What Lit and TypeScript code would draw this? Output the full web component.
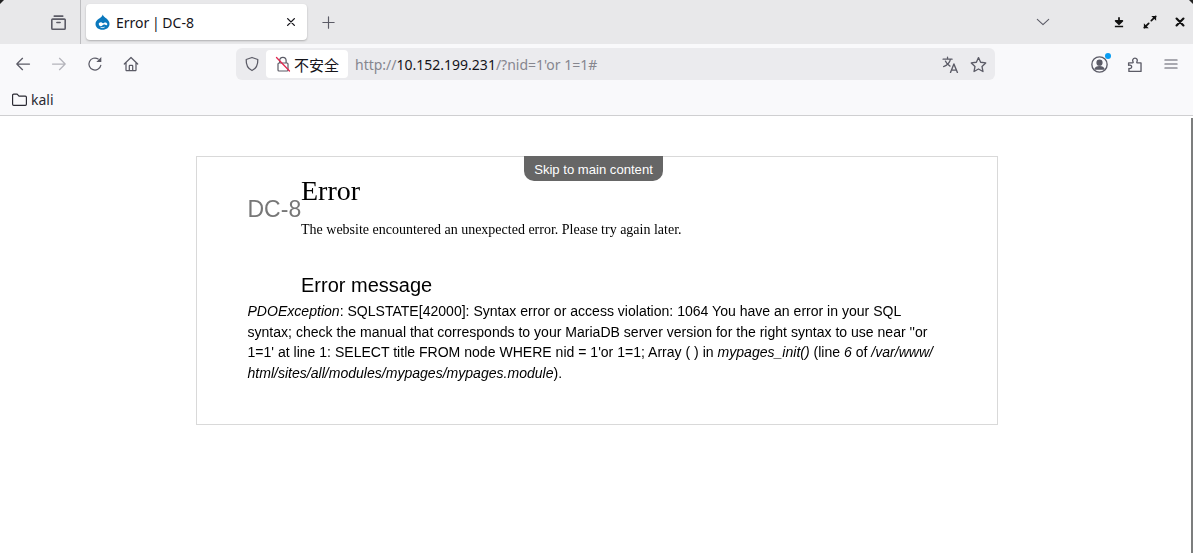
import { LitElement, html, css, svg } from "lit";
import { customElement } from "lit/decorators.js";

const ic = (w: number, body: unknown, cls = "") => html`<svg class="ic ${cls}" width=${w} height=${w} viewBox="0 0 16 16" fill="none" stroke="currentColor" stroke-width="1.25" stroke-linecap="round" stroke-linejoin="round">${body}</svg>`;

@customElement("app-root")
export class AppRoot extends LitElement {
  static styles = css`
    :host { display: block; width: 1193px; height: 554px; position: relative; overflow: hidden; background: #fff; font-family: "Noto Sans", sans-serif; color: #15141a; }
    .gray { will-change: opacity; }
    .ic { display: block; flex: none; }
    .tabbar { height: 44px; background: #e8e8ea; display: flex; align-items: stretch; }
    .side { flex: none; border-right: 1px solid #bdbdc0; display: flex; align-items: center; justify-content: flex-end; padding-right: 13px; width: 67px; color: #5b5b66; }
    .tab { margin: 4px 0 4px 5px; width: 221px; height: 36px; background: #fff; border-radius: 4px; box-shadow: 0 1px 2px rgba(0,0,0,.25); display: flex; align-items: center; padding: 0 10px 0 9px; box-sizing: border-box; font-size: 14px; gap: 6px; }
    .tab-title { flex: 1; white-space: nowrap; word-spacing: -1px; }
    .plus { margin-left: 14px; align-self: center; color: #5b5b66; }
    .spacer { flex: 1; }
    .wctl { display: flex; align-items: center; color: #5b5b66; }
    .chev { margin-right: 63px; }
    .wbtns { display: flex; align-items: center; gap: 18px; padding-right: 8px; color: #111; }
    .toolbar { height: 40px; background: #f9f9fb; display: flex; align-items: center; color: #5b5b66; }
    .nav { display: flex; align-items: center; gap: 20px; padding-left: 15px; width: 221px; }
    .dim { color: #b4b4bb; }
    .urlbar { width: 759px; height: 32px; background: #ebebee; border-radius: 6px; display: flex; align-items: center; box-sizing: border-box; padding-left: 8px; }
    .secure { margin-left: 6px; width: 82px; height: 28px; background: #fff; border-radius: 4px; display: flex; align-items: center; padding-left: 9px; box-sizing: border-box; gap: 3px; color: #15141a; font: 15px "Noto Sans CJK SC", "Noto Sans", sans-serif; }
    .url { margin-left: 7px; font-size: 14px; color: #86868e; white-space: nowrap; flex: 1; }
    .url b { font-weight: 400; color: #15141a; }
    .urlicons { display: flex; gap: 11px; align-items: center; padding-right: 8px; }
    .right { display: flex; align-items: center; gap: 19px; margin-left: 96px; }
    .menu { margin-left: 1px; }
    .acct { position: relative; }
    .dot { position: absolute; right: -3px; top: -3px; width: 6px; height: 6px; border-radius: 50%; background: #0a9df2; }
    .bookmarks { height: 31px; background: #f9f9fb; border-bottom: 1px solid #cfcfd1; display: flex; align-items: center; padding-left: 11px; gap: 3px; font-size: 14px; color: #2b2a33; }
    .page { padding: 40px 195px 0 196px; }
    .box { position: relative; width: 802px; height: 269px; box-sizing: border-box; border: 1px solid #d9d9d9; padding: 15px 51px 0 50.500px; font-family: "Liberation Sans", Arial, sans-serif; font-size: 14.05px; line-height: 20.67px; color: #000; }
    .skip { position: absolute; top: -1px; left: 327px; width: 139px; height: 25px; background: #666; color: #fff; font-size: 13.1px; line-height: 28px; text-align: center; border-radius: 0 0 10px 10px; }
    .head { display: flex; }
    .site { width: 53.500px; flex: none; margin-top: 22px; font-size: 23px; line-height: 30px; color: #777; white-space: nowrap; }
    h1 { margin: 0; font: 400 28px/38px "Liberation Serif", "Times New Roman", serif; }
    .lead { margin: 10px 0 0; font: 14px/20px "Liberation Serif", "Times New Roman", serif; }
    h2 { margin: 33px 0 0; font: 400 20px/24px "Liberation Sans", Arial, sans-serif; }
    .msg { margin: 4px 0 0; width: 690px; }
    .corner { position: absolute; top: 0; width: 4px; height: 4px; background: #222; }
    .corner.l { left: 0; clip-path: polygon(0 0, 100% 0, 0 100%); }
    .corner.r { right: 0; clip-path: polygon(0 0, 100% 0, 100% 100%); }
    .scroll { position: absolute; right: 0; top: 118px; bottom: 1px; width: 2px; background: #7c7e7e; }
  `;

  render() {
    return html`
      <div class="gray">
      <div class="tabbar">
        <div class="side">
          ${ic(17, svg`<path d="M4 2h8M2.500 4.800h11a.8.8 0 0 1 .8.8v7.700a1 1 0 0 1-1 1H2.700a1 1 0 0 1-1-1V5.600a.8.8 0 0 1 .8-.8zM6.500 8h3" stroke-width="1.500"/>`)}
        </div>
        <div class="tab">
          <svg class="ic" width="15" height="16" viewBox="0 0 15 16">
            <path d="M7.700.5c.5 1.900 2.300 2.800 3.800 4.100 1.800 1.500 3 3.100 3 5.300 0 3.400-3 5.800-7 5.800s-7-2.500-7-5.800c0-2.300 1.500-4 3.300-5.200C5.500 3.700 7.200 2.700 7.700.5z" fill="#0a78bd"/>
            <path d="M3.500 10.300c.4-1.400 2-2.500 3.200-1.700.8.500 1.300.9 2.200.3.900-.7 2.600-.7 3.200.7.400 1 0 1.600-.7 1.700-1 .1-1.700-1.200-3-.5-.8.400-1.200 1.300-2.400 1.300-1.400 0-2.300-.7-2-1.800z" fill="#fff"/>
            <path d="M5.500 13.100c1.200.6 2.800.6 4 0" stroke="#fff" fill="none"/>
          </svg>
          <span class="tab-title">Error | DC-8</span>
          ${ic(12, svg`<path d="M3.500 3.500l9 9M12.500 3.500l-9 9" stroke-width="1.800"/>`)}
        </div>
        ${ic(15, svg`<path d="M8 2v12M2 8h12"/>`, "plus")}
        <div class="spacer"></div>
        <div class="wctl">
          ${ic(14, svg`<path d="M1.500 5l6.500 6 6.500-6"/>`, "chev")}
          <div class="wbtns">
            ${ic(12, svg`<path d="M8 1.500v6M3.500 6.500h9L8 11zM2.500 14h11" stroke-width="2.300" stroke-linecap="butt" fill="currentColor"/>`)}
            ${ic(14, svg`<path d="M9.500 6.500l5-5M6.500 9.500l-5 5" stroke-width="2"/><path d="M9.500 1H15v5.500zM6.500 15H1V9.500z" fill="currentColor" stroke="none"/>`)}
            ${ic(10, svg`<path d="M2.500 2.500l11 11M13.500 2.500l-11 11" stroke-width="3.500"/>`)}
          </div>
        </div>
      </div>

      <div class="toolbar">
        <div class="nav">
          ${ic(16, svg`<path d="M14.500 8H1.800M7.500 2.300L1.800 8l5.700 5.700"/>`)}
          ${ic(16, svg`<path d="M1.500 8h12.700M8.500 2.300L14.200 8l-5.700 5.700"/>`, "dim")}
          ${ic(16, svg`<path d="M13.800 9.300A6 6 0 1 1 11.200 3"/><path d="M14.300 1v5h-5z" fill="currentColor" stroke="none"/>`)}
          ${ic(16, svg`<path d="M1.300 8L8 1.500 14.700 8M3 6.500V14a.7.7 0 0 0 .7.700h8.600A.7.7 0 0 0 13 14V6.500M6.300 14.700V10a.6.600 0 0 1 .6-.6h2.200a.6.6 0 0 1 .6.600v4.700"/>`)}
        </div>
        <div class="urlbar">
          ${ic(16, svg`<path d="M8 1.500L13.800 3.500c.2 4.500-.8 8.800-5.800 11-5-2.200-6-6.500-5.800-11z"/>`)}
          <div class="secure">
            <svg class="ic" width="16" height="16" viewBox="0 0 16 16" fill="none" stroke="#5b5b66" stroke-width="1.200" stroke-linecap="round" stroke-linejoin="round">
              <path d="M4.700 7V4.500a3.200 3.200 0 0 1 6.400 0V7M4 7h8a1 1 0 0 1 1 1v6a1 1 0 0 1-1 1H4a1 1 0 0 1-1-1V8a1 1 0 0 1 1-1z"/>
              <path d="M1.500 1.500l13 13.500" stroke="#e22850" stroke-width="1.300"/>
            </svg>
            <span>不安全</span>
          </div>
          <div class="url">http://<b>10.152.199.231</b>/?nid=1'or 1=1#</div>
          <div class="urlicons">
            ${ic(17, svg`<path d="M1 3h8.500M5.200 1v2M8 3c-.7 3.200-3 5.800-6.500 7M3.200 4.800c.8 2 2.600 3.800 4.300 4.700" stroke-width="1.200"/><path d="M8 15.500l3.200-8 3.300 8M9 13.300h4.500" stroke-width="1.300"/>`)}
            ${ic(17, svg`<path d="M8 1.500l2 4.400 4.800.6-3.500 3.300.9 4.800L8 12.200l-4.200 2.400.9-4.800L1.200 6.500 6 5.900z"/>`)}
          </div>
        </div>
        <div class="right">
          <div class="acct">
            ${ic(17, svg`<circle cx="8" cy="8" r="7.200"/><circle cx="8" cy="6.300" r="2.300" fill="currentColor"/><path d="M3.800 12.300c.5-1.600 2-2.300 4.200-2.300s3.700.7 4.200 2.300z" fill="currentColor"/>`)}
            <span class="dot"></span>
          </div>
          ${ic(17, svg`<path d="M1.500 6.500h3.700c.6 0 .8-.5.5-1-.9-1.400-.2-3.500 1.800-3.500s2.700 2 1.800 3.500c-.3.500 0 1 .6 1h3.300v8H1.800v-2.800c1.300.4 2.600-.4 2.600-1.700S3 8.300 1.500 8.800z"/>`)}
          ${ic(14, svg`<path d="M1 3.500h14M1 8h14M1 12.500h14"/>`, "menu")}
        </div>
      </div>

      <div class="bookmarks">
        ${ic(17, svg`<path d="M1.500 4a1 1 0 0 1 1-1h3.300l1.700 1.800h6a1 1 0 0 1 1 1V12.500a1 1 0 0 1-1 1H2.500a1 1 0 0 1-1-1z" stroke-width="1.100"/>`)}
        <span>kali</span>
      </div>

      <div class="page">
        <div class="box">
          <div class="skip">Skip to main content</div>
          <div class="head">
            <div class="site">DC-8</div>
            <div>
              <h1>Error</h1>
              <p class="lead">The website encountered an unexpected error. Please try again later.</p>
              <h2>Error message</h2>
            </div>
          </div>
          <p class="msg"><em>PDOException</em>: SQLSTATE[42000]: Syntax error or access violation: 1064 You have an error in your SQL syntax; check the manual that corresponds to your MariaDB server version for the right syntax to use near ''or 1=1' at line 1: SELECT title FROM node WHERE nid = 1'or 1=1; Array ( ) in <em>mypages_init()</em> (line <em>6</em> of <em>/var/www/<wbr>html/sites/all/modules/mypages/mypages.module</em>).</p>
        </div>
      </div>
      </div>
      <span class="scroll"></span>
      <span class="corner l"></span><span class="corner r"></span>
    `;
  }
}
